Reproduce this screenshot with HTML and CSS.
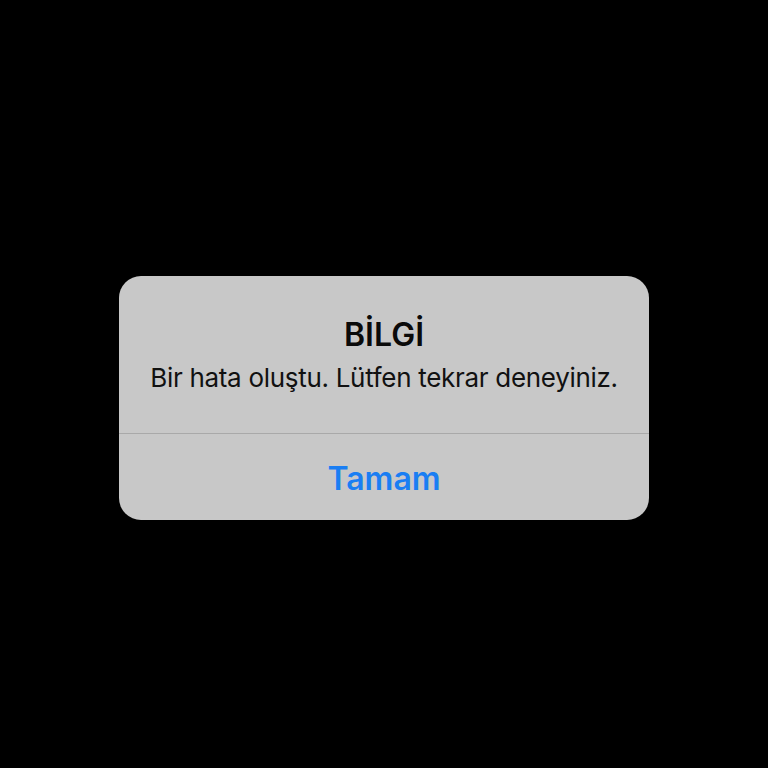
FILE: index.html
```html
<!DOCTYPE html>
<html lang="tr">
<head>
<meta charset="utf-8">
<link rel="stylesheet" href="styles.css">
</head>
<body>
<div class="screen">
  <div class="alert">
    <div class="alert-body">
      <div class="alert-title">BİLGİ</div>
      <div class="alert-message">Bir hata oluştu. Lütfen tekrar deneyiniz.</div>
    </div>
    <div class="alert-actions">
      <div class="alert-button">Tamam</div>
    </div>
  </div>
</div>
</body>
</html>
```

FILE: styles.css
```css
html, body {
  margin: 0;
  padding: 0;
  background: #000;
}
.screen {
  width: 768px;
  height: 768px;
  display: flex;
  justify-content: center;
  align-items: flex-start;
  padding-top: 276px;
  box-sizing: border-box;
  font-family: Inter, "Noto Sans", sans-serif;
}
.alert {
  width: 530px;
  height: 244px;
  background: #c8c8c8;
  border-radius: 22px;
  display: flex;
  flex-direction: column;
  overflow: hidden;
}
.alert-body {
  height: 158px;
  box-sizing: border-box;
  padding-top: 39px;
  display: flex;
  flex-direction: column;
  align-items: center;
  border-bottom: 1px solid #a9a9a9;
}
.alert-title {
  font-size: 32px;
  font-weight: 600;
  color: #0a0a0a;
  line-height: 40px;
}
.alert-message {
  margin-top: 7px;
  font-size: 26px;
  letter-spacing: -0.3px;
  color: #111;
  line-height: 32px;
}
.alert-actions {
  flex: 1;
  display: flex;
  align-items: center;
  justify-content: center;
  padding-top: 3px;
}
.alert-button {
  font-size: 32px;
  font-weight: 600;
  color: #1a7ef3;
  line-height: 38px;
}
```
